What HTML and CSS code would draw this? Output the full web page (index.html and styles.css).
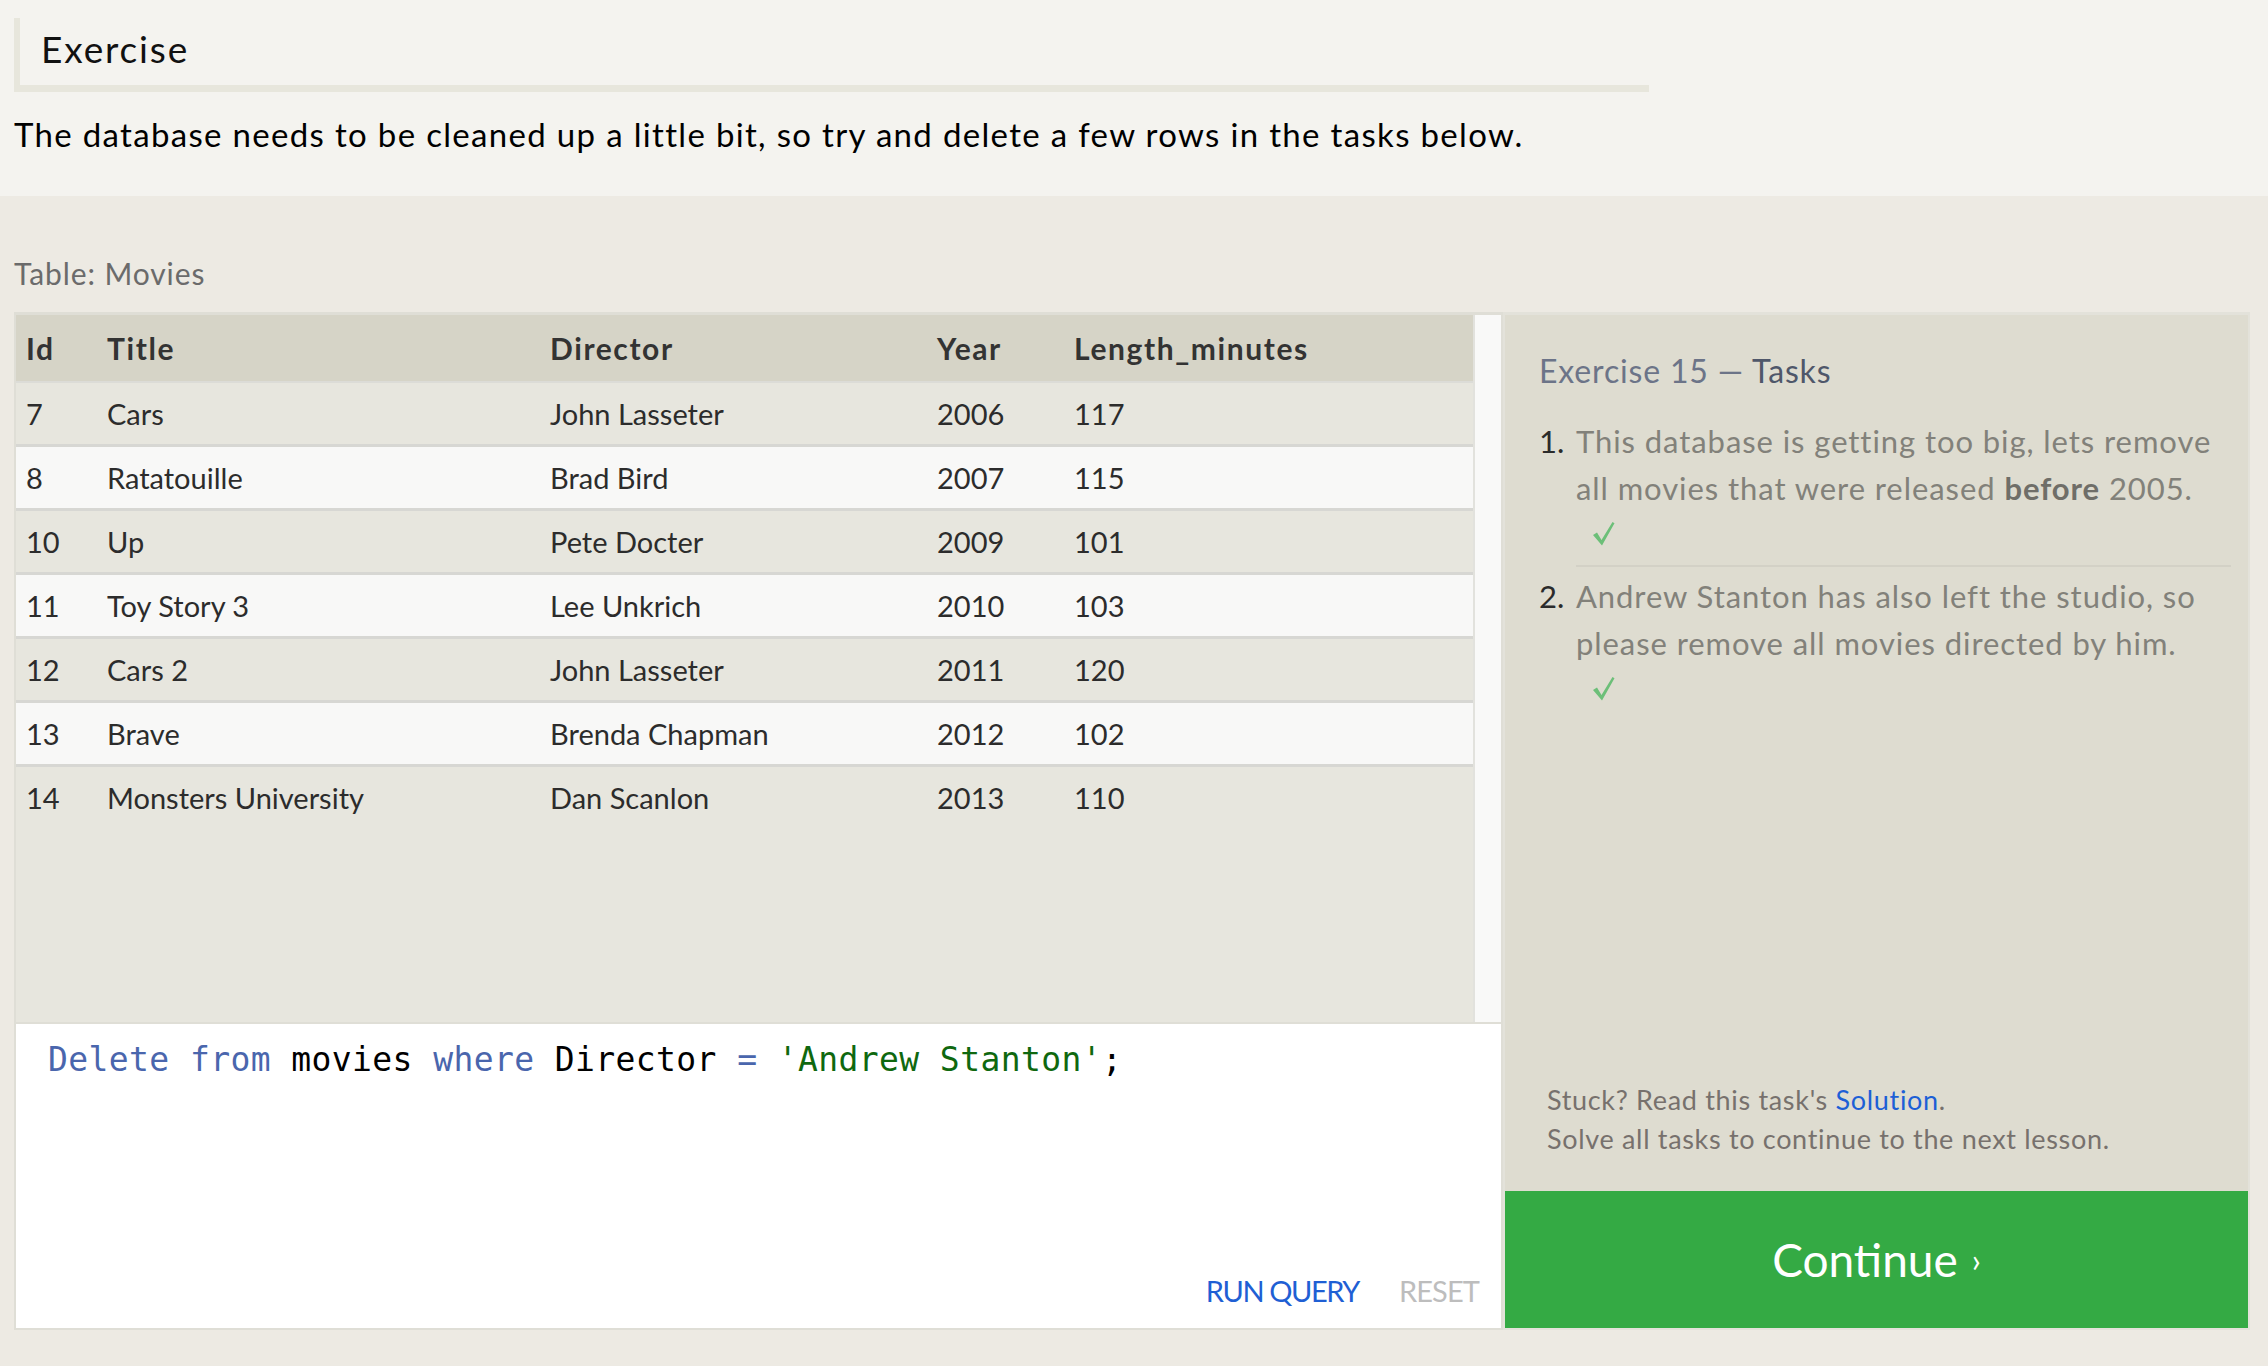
FILE: index.html
```html
<!DOCTYPE html>
<html lang="en">
<head>
<meta charset="utf-8">
<title>SQL Lesson 15: Deleting rows</title>
<link rel="stylesheet" href="styles.css">
</head>
<body>
<section class="intro">
  <h2 class="intro-title">Exercise</h2>
  <p class="intro-text">The database needs to be cleaned up a little bit, so try and delete a few rows in the tasks below.</p>
</section>
<main class="main">
  <div class="table-label">Table: Movies</div>
  <div class="workspace">
    <div class="left">
      <div class="table-wrap">
        <div class="table-scroll">
          <table class="data">
            <thead>
              <tr><th class="c-id">Id</th><th class="c-title">Title</th><th class="c-dir">Director</th><th class="c-year">Year</th><th>Length_minutes</th></tr>
            </thead>
            <tbody>
              <tr><td>7</td><td>Cars</td><td>John Lasseter</td><td>2006</td><td>117</td></tr>
              <tr><td>8</td><td>Ratatouille</td><td>Brad Bird</td><td>2007</td><td>115</td></tr>
              <tr><td>10</td><td>Up</td><td>Pete Docter</td><td>2009</td><td>101</td></tr>
              <tr><td>11</td><td>Toy Story 3</td><td>Lee Unkrich</td><td>2010</td><td>103</td></tr>
              <tr><td>12</td><td>Cars 2</td><td>John Lasseter</td><td>2011</td><td>120</td></tr>
              <tr><td>13</td><td>Brave</td><td>Brenda Chapman</td><td>2012</td><td>102</td></tr>
              <tr><td>14</td><td>Monsters University</td><td>Dan Scanlon</td><td>2013</td><td>110</td></tr>
            </tbody>
          </table>
        </div>
        <div class="scrollbar"></div>
      </div>
      <div class="editor">
        <div class="code"><span class="kw">Delete</span> <span class="kw">from</span> movies <span class="kw">where</span> Director <span class="kw">=</span> <span class="str">'Andrew Stanton'</span>;</div>
        <div class="editor-actions">
          <span class="run">RUN QUERY</span>
          <span class="reset">RESET</span>
        </div>
      </div>
    </div>
    <aside class="panel">
      <div class="tasks">
        <h3 class="tasks-title"><span class="tt-light">Exercise 15 — </span><span class="tt-dark">Tasks</span></h3>
        <ol class="task-list">
          <li class="task">
            <span class="num">1.</span>
            <div class="body">This database is getting too big, lets remove all movies that were released <b>before</b> 2005.
              <div class="check"><svg class="check-icon" width="22" height="24" viewBox="0 0 22 24"><path d="M0 13 L4 10.5 L8.5 18 L19.5 0 L21.5 1.2 L9 23.5 Z" fill="#6cbf78"/></svg></div>
            </div>
          </li>
          <li class="task">
            <span class="num">2.</span>
            <div class="body">Andrew Stanton has also left the studio, so please remove all movies directed by him.
              <div class="check"><svg class="check-icon" width="22" height="24" viewBox="0 0 22 24"><path d="M0 13 L4 10.5 L8.5 18 L19.5 0 L21.5 1.2 L9 23.5 Z" fill="#6cbf78"/></svg></div>
            </div>
          </li>
        </ol>
      </div>
      <div class="help">
        <div>Stuck? Read this task's <span class="link">Solution</span>.</div>
        <div>Solve all tasks to continue to the next lesson.</div>
      </div>
      <div class="continue">Continue <span class="chev">›</span></div>
    </aside>
  </div>
</main>
</body>
</html>
```
FILE: styles.css
```css
html, body {
  margin: 0;
  padding: 0;
}
body {
  background: #edeae3;
  font-family: Lato, "Open Sans", sans-serif;
  color: #111;
}
.intro {
  background: #f4f3ef;
  padding: 18px 0 39px 14px;
}
.intro-title {
  margin: 0;
  width: 1608px;
  border-left: 6px solid #e7e6dc;
  border-bottom: 7px solid #e7e6dc;
  padding: 0 0 6px 21px;
  font-size: 37px;
  font-weight: 400;
  line-height: 61px;
  letter-spacing: 0.05em;
  color: #111;
}
.intro-text {
  margin: 19px 0 0 0;
  font-size: 33px;
  line-height: 46px;
  letter-spacing: 0.04em;
  color: #000;
}
.main {
  padding: 59px 18px 35px 14px;
}
.table-label {
  font-size: 30px;
  line-height: 36px;
  letter-spacing: 0.03em;
  color: #6b6b6b;
}
.workspace {
  margin-top: 21px;
  display: flex;
  align-items: stretch;
}
.left {
  width: 1485px;
  border: 2px solid #dfded6;
  border-top-width: 3px;
  background: #e2e2dd;
  display: flex;
  flex-direction: column;
}
.table-wrap {
  height: 707px;
  display: flex;
  gap: 2px;
}
.table-scroll {
  flex: 1;
  background: #e7e6de;
  overflow: hidden;
}
.scrollbar {
  width: 26px;
  background: #f9f9f8;
}
.data {
  border-collapse: collapse;
  width: 100%;
  font-size: 29px;
  color: #2c2c2c;
}
.data th, .data td {
  text-align: left;
  padding: 0 0 0 10px;
  white-space: nowrap;
}
.data th {
  height: 66px;
  background: #d6d4c7;
  font-weight: 700;
  font-size: 30px;
  letter-spacing: 1.6px;
  border-bottom: 2px solid #dcdcd7;
  color: #333;
}
.data td {
  height: 61px;
  border-bottom: 3px solid #d7d7d3;
}
.data tbody tr:nth-child(even) td {
  background: #f8f8f7;
}
.data tbody tr:last-child td {
  border-bottom: none;
}
.c-id { width: 71px; }
.c-title { width: 433px; }
.c-dir { width: 377px; }
.c-year { width: 127px; }
.editor {
  border-top: 2px solid #dfded6;
  background: #fff;
  display: flex;
  flex-direction: column;
  justify-content: space-between;
  padding: 16px 22px 20px 32px;
  box-sizing: border-box;
  height: 306px;
}
.code {
  font-family: "DejaVu Sans Mono", monospace;
  font-size: 33px;
  line-height: 39.6px;
  letter-spacing: 0.4px;
  color: #000;
  white-space: pre;
}
.kw { color: #4a66ad; }
.str { color: #0f680f; }
.editor-actions {
  display: flex;
  justify-content: flex-end;
  gap: 40px;
  font-size: 29px;
  line-height: 35px;
}
.run { color: #1f5fd4; letter-spacing: -1.4px; }
.reset { color: #bdbdbd; letter-spacing: -0.9px; }
.panel {
  width: 743px;
  border: 2px solid #e3e2da;
  border-top-width: 3px;
  background: #dedcd0;
  display: flex;
  flex-direction: column;
}
.tasks {
  flex: 1;
  padding: 37px 17px 0 34px;
}
.tasks-title {
  margin: 0;
  font-size: 32px;
  font-weight: 400;
  line-height: 38px;
  letter-spacing: 0.026em;
}
.tt-light { color: #6c7488; }
.tt-dark { color: #4f576a; }
.task-list {
  list-style: none;
  margin: 28px 0 0 0;
  padding: 0;
  font-size: 31px;
  line-height: 47px;
  letter-spacing: 0.03em;
  color: #82817a;
}
.task {
  display: flex;
}
.task + .task {
  padding-top: 6px;
}
.num {
  width: 37px;
  flex: none;
  color: #2b2b2b;
  letter-spacing: 0;
}
.body {
  flex: 1;
}
.task:not(:last-child) .body {
  padding-bottom: 6px;
  border-bottom: 2px solid #d3d1c6;
}
.body b {
  color: #6f6e68;
}
.check {
  height: 47px;
  padding-left: 17px;
}
.check-icon {
  display: block;
  padding-top: 10px;
}
.help {
  padding: 0 20px 33px 42px;
  font-size: 27px;
  line-height: 39px;
  letter-spacing: 0.025em;
  color: #77716d;
}
.link { color: #1c5fd6; }
.continue {
  height: 137px;
  background: #34aa44;
  color: #fff;
  display: flex;
  align-items: center;
  justify-content: center;
  font-size: 46px;
  line-height: 1;
  gap: 14px;
}
.chev {
  font-size: 32px;
}
```
